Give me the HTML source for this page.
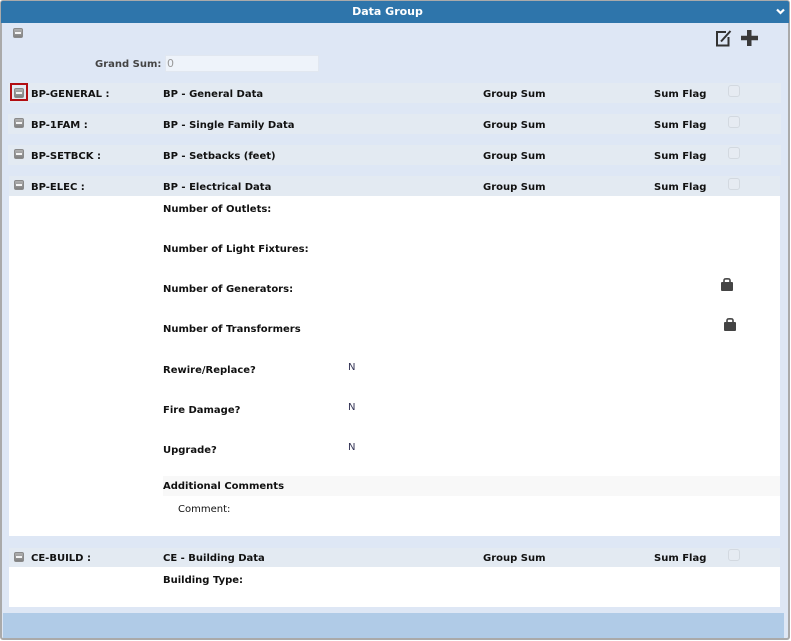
<!DOCTYPE html>
<html><head><meta charset="utf-8"><style>
html,body{margin:0;padding:0;width:791px;height:641px;overflow:hidden;background:#fff}
*{box-sizing:border-box}
#w{position:absolute;left:0;top:0;width:790px;height:640px;background:#dee7f5;border:1px solid #aaa;border-left-width:2px;border-bottom-width:2px;border-right-width:2px;border-radius:3px;}
.a{position:absolute;white-space:nowrap;font-family:"DejaVu Sans",Verdana,sans-serif;font-size:10px;line-height:14px;color:#111;margin-top:1px}
.b{font-weight:bold}
.r{position:absolute;left:9px;width:771px;height:20px;background:#e3eaf2}
.o{left:8px;width:773px}
.wh{position:absolute;left:9px;width:771px;background:#fff}
.m{position:absolute;width:10px;height:10px;border-radius:2px;background:linear-gradient(#b0b0b0,#808080);border:1px solid #8a8a8a}
.m:after{content:"";position:absolute;left:1px;top:3px;width:6px;height:2px;background:#f4f4f4}
.c{position:absolute;width:12px;height:12px;border:1px solid #d3d9e0;border-radius:3px;background:#e6ebf2}
svg{position:absolute}
</style></head><body>
<div id="w"></div>
<div style="position:absolute;left:1px;top:1px;width:788px;height:22px;background:#2e75ab;border-radius:2px 2px 0 0"></div>
<div class="a b" style="left:0;width:775px;text-align:center;top:5px;color:#fff;font-size:11px;margin-top:0">Data Group</div>
<svg style="left:776px;top:8px" width="9" height="7" viewBox="0 0 9 7"><path d="M1 1.500L4.500 5L8 1.500" fill="none" stroke="#fff" stroke-width="2.200"/></svg>

<div class="m" style="left:13px;top:28px"></div>
<svg style="left:715px;top:29px" width="18" height="18" viewBox="0 0 18 18"><path d="M11 3H2V16.500H13.500V8" fill="none" stroke="#333" stroke-width="2"/><path d="M6 12.500L15.500 2" stroke="#333" stroke-width="2"/></svg>
<svg style="left:741px;top:30px" width="17" height="16" viewBox="0 0 17 16"><path d="M6 0h4.500v5.800h6.500v4.400h-6.500v5.800h-4.500v-5.800H0V5.800h6z" fill="#3a3a3a"/></svg>

<div class="a b" style="left:95px;top:57px;color:#444">Grand Sum:</div>
<div style="position:absolute;left:165px;top:55px;width:154px;height:17px;background:#eef3fa;border:1px solid #e1e7f0"></div>
<div class="a" style="left:167px;top:57px;color:#999;font-size:11px;margin-top:0">0</div>

<div class="r o" style="top:83px"></div>
<div class="r o" style="top:114px"></div>
<div class="r o" style="top:145px"></div>
<div class="r" style="top:176px"></div>
<div class="wh" style="top:196px;height:340px"></div>
<div class="r" style="top:548px;height:19px"></div>
<div class="wh" style="top:567px;height:40px"></div>
<div style="position:absolute;left:163px;top:476px;width:617px;height:20px;background:#f8f8f8"></div>
<div style="position:absolute;left:3px;top:613px;width:781px;height:25px;background:#b0cbe7"></div>

<div style="position:absolute;left:10px;top:83px;width:18px;height:18px;border:2px solid #b20d12"></div>
<div class="m" style="left:14px;top:88px"></div>
<div class="m" style="left:14px;top:118px"></div>
<div class="m" style="left:14px;top:149px"></div>
<div class="m" style="left:14px;top:180px"></div>
<div class="m" style="left:14px;top:552px"></div>

<div class="a b" style="left:31px;top:87px">BP-GENERAL :</div>
<div class="a b" style="left:163px;top:87px">BP - General Data</div>
<div class="a b" style="left:483px;top:87px">Group Sum</div>
<div class="a b" style="left:654px;top:87px">Sum Flag</div>
<div class="c" style="left:728px;top:85px"></div>

<div class="a b" style="left:31px;top:118px">BP-1FAM :</div>
<div class="a b" style="left:163px;top:118px">BP - Single Family Data</div>
<div class="a b" style="left:483px;top:118px">Group Sum</div>
<div class="a b" style="left:654px;top:118px">Sum Flag</div>
<div class="c" style="left:728px;top:116px"></div>

<div class="a b" style="left:31px;top:149px">BP-SETBCK :</div>
<div class="a b" style="left:163px;top:149px">BP - Setbacks (feet)</div>
<div class="a b" style="left:483px;top:149px">Group Sum</div>
<div class="a b" style="left:654px;top:149px">Sum Flag</div>
<div class="c" style="left:728px;top:147px"></div>

<div class="a b" style="left:31px;top:180px">BP-ELEC :</div>
<div class="a b" style="left:163px;top:180px">BP - Electrical Data</div>
<div class="a b" style="left:483px;top:180px">Group Sum</div>
<div class="a b" style="left:654px;top:180px">Sum Flag</div>
<div class="c" style="left:728px;top:178px"></div>

<div class="a b" style="left:163px;top:202px">Number of Outlets:</div>
<div class="a b" style="left:163px;top:242px">Number of Light Fixtures:</div>
<div class="a b" style="left:163px;top:282px">Number of Generators:</div>
<div class="a b" style="left:163px;top:322px">Number of Transformers</div>
<div class="a b" style="left:163px;top:363px">Rewire/Replace?</div>
<div class="a b" style="left:163px;top:403px">Fire Damage?</div>
<div class="a b" style="left:163px;top:443px">Upgrade?</div>
<div class="a" style="left:348px;top:361px;color:#335;margin-top:0">N</div>
<div class="a" style="left:348px;top:401px;color:#335;margin-top:0">N</div>
<div class="a" style="left:348px;top:441px;color:#335;margin-top:0">N</div>

<svg style="left:721px;top:278px" width="12" height="13" viewBox="0 0 12 13"><path d="M3 5V2.500C3 .8 4 .8 6 .8S9 .8 9 2.500V5" fill="none" stroke="#444" stroke-width="1.600"/><rect x="0" y="4" width="12" height="9" rx="1" fill="#444"/></svg>
<svg style="left:724px;top:318px" width="12" height="13" viewBox="0 0 12 13"><path d="M3 5V2.500C3 .8 4 .8 6 .8S9 .8 9 2.500V5" fill="none" stroke="#444" stroke-width="1.600"/><rect x="0" y="4" width="12" height="9" rx="1" fill="#444"/></svg>

<div class="a b" style="left:163px;top:479px">Additional Comments</div>
<div class="a" style="left:178px;top:502px">Comment:</div>

<div class="a b" style="left:31px;top:551px">CE-BUILD :</div>
<div class="a b" style="left:163px;top:551px">CE - Building Data</div>
<div class="a b" style="left:483px;top:551px">Group Sum</div>
<div class="a b" style="left:654px;top:551px">Sum Flag</div>
<div class="c" style="left:728px;top:549px"></div>
<div class="a b" style="left:163px;top:573px">Building Type:</div>
</body></html>
